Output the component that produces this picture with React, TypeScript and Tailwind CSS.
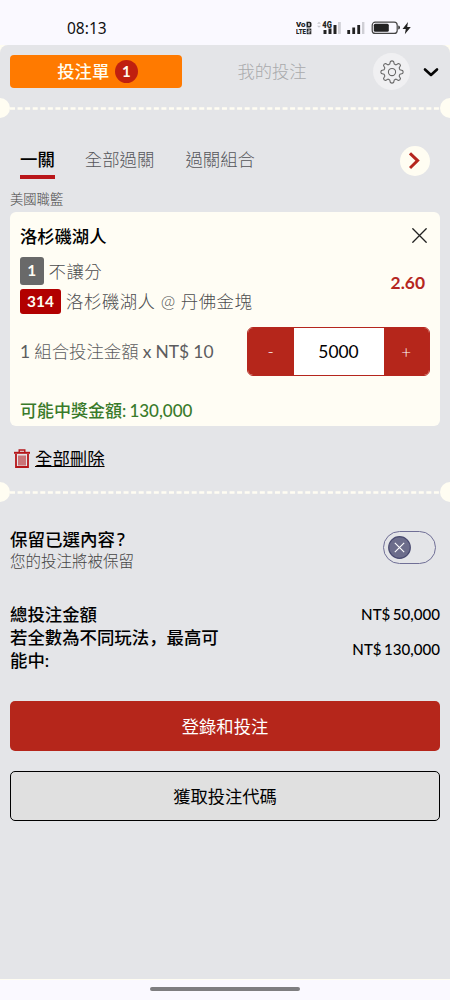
import { useState } from "react";

interface Pick {
  order: number;
  market: string;
  code: string;
  matchup: string;
}

const modes = ["一關", "全部過關", "過關組合"];

const pick: Pick = {
  order: 1,
  market: "不讓分",
  code: "314",
  matchup: "洛杉磯湖人 @ 丹佛金塊"
};

function StatusBar() {
  return (
    <div className="flex h-[45px] items-center justify-between pr-[38px] pl-[67px] pt-[10px]">
      <span className="font-['Noto_Sans'] text-[15.5px] leading-[20px] text-[#111]">08:13</span>
      <svg width="116" height="16" viewBox="0 0 116 16" fill="#222" fontFamily="Roboto, sans-serif" fontWeight="900">
        <text x="0" y="7.2" fontSize="7.8" textLength="9.5" lengthAdjust="spacingAndGlyphs">Vo</text>
        <path fillRule="evenodd" d="M10.5 1.7h3.2q1.8 0 1.8 1.8v2.2q0 1.8-1.8 1.8h-3.2zM12.3 3.1v3h.8q.6 0 .6-.6V3.7q0-.6-.6-.6z" />
        <text x="0" y="14.2" fontSize="7.6" textLength="10" lengthAdjust="spacingAndGlyphs">LTE</text>
        <rect x="10.7" y="8.6" width="4.6" height="5.6" />
        <path d="M11.9 10h2.2v1.4h-2.1v1.5h2.2" fill="none" stroke="#faf9ff" strokeWidth=".7" />
        <path d="M21 3.8l2-2 2 2zM21 5.8l2 2 2-2z" fill="#c9c9cf" />
        <text x="26.3" y="7.8" fontSize="8.4" textLength="9.5" lengthAdjust="spacingAndGlyphs">4G</text>
        <path d="M27.5 10h3v4h-3zM32.5 8.5h3v5.5h-3zM37.5 5h3v9h-3z" />
        <path d="M42 2h2.8v12H42z" fill="#cfcfd5" />
        <path d="M51.3 10h2.8v4h-2.8zM56.3 7.5h2.8V14h-2.8zM61.3 5h2.8v9h-2.8z" />
        <path d="M66 2h2.4v12H66z" fill="#cfcfd5" />
        <rect x="76.2" y="2.2" width="25" height="11.2" rx="3" fill="none" stroke="#444" strokeWidth="1.2" />
        <rect x="77.8" y="3.8" width="15" height="8" rx="1.5" />
        <path d="M102.3 5.5q1.6 0 1.6 2t-1.6 2z" />
        <path d="M112 2l-5.5 7h3.3l-1 5.3 6-7.3h-3.6z" />
      </svg>
    </div>
  );
}

function TicketDivider() {
  return (
    <div className="relative h-5 overflow-hidden">
      <svg className="block" width="450" height="20">
        <circle cx="0" cy="10" r="10" fill="#fffdf2" />
        <circle cx="450" cy="10" r="10" fill="#fffdf2" />
        <path d="M10 10.5H440" stroke="#fffdf2" strokeWidth="2.6" strokeDasharray="5 2.57" />
      </svg>
    </div>
  );
}

function Header() {
  return (
    <header className="flex h-[53px] items-center pl-[10px]">
      <button className="flex h-[33px] w-[172px] items-center justify-center gap-[6px] rounded-[4px] bg-[#ff7a00] pl-[3px] text-[17.3px] font-medium text-[#fffdf0]">
        投注單
        <span className="flex size-[22.5px] items-center justify-center rounded-full bg-[#c0200f] text-[15px] font-bold">1</span>
      </button>
      <button className="ml-[3px] w-[174px] text-center text-[17.3px] font-light text-[#a9aaac]">我的投注</button>
      <button className="ml-[14px] flex size-[37px] items-center justify-center rounded-full bg-[#f0f0f2]">
        <svg width="24" height="24" viewBox="0 0 24 24" fill="none" stroke="#666" strokeWidth="1.05" strokeLinejoin="round">
          <path d="M10.4 1.5Q12 .3 13.6 1.5L14.3 4.1 16.1 4.9 18.4 3.5Q20.3 3.7 20.5 5.6L19.1 7.9 19.9 9.7 22.5 10.4Q23.7 12 22.5 13.6L19.9 14.3 19.1 16.1 20.5 18.4Q20.3 20.3 18.4 20.5L16.1 19.1 14.3 19.9 13.6 22.5Q12 23.7 10.4 22.5L9.7 19.9 7.9 19.1 5.6 20.5Q3.7 20.3 3.5 18.4L4.9 16.1 4.1 14.3 1.5 13.6Q.3 12 1.5 10.4L4.1 9.7 4.9 7.9 3.5 5.6Q3.7 3.7 5.6 3.5L7.9 4.9 9.7 4.1z" />
          <circle cx="12" cy="12" r="3.6" />
        </svg>
      </button>
      <svg className="mt-px ml-[13px]" width="16" height="12" viewBox="0 0 16 12" fill="none" stroke="#050505" strokeWidth="2.6" strokeLinecap="round" strokeLinejoin="round">
        <path d="M2 3.5L8 9l6-5.5" />
      </svg>
    </header>
  );
}

function ModeTabs() {
  const [active, setActive] = useState(0);
  return (
    <nav className="mt-[22px] flex h-10 items-start pr-[20px] pl-5">
      {modes.map((mode, i) => (
        <button
          key={mode}
          onClick={() => setActive(i)}
          className={
            i === active
              ? "mr-[30px] h-[39px] border-b-[4px] border-[#b9161a] pt-[5px] text-[17.4px] leading-[30px] font-medium text-black"
              : "mr-[31px] pt-[5px] text-[17.4px] leading-[30px] font-light text-[#55565a]"
          }
        >
          {mode}
        </button>
      ))}
      <button className="mt-[6px] ml-auto flex size-[30px] items-center justify-center rounded-full bg-[#fffdf2]">
        <svg width="12" height="18" viewBox="0 0 12 18" fill="none" stroke="#b5261e" strokeWidth="3">
          <path d="M1 1.3L8.6 8.6 1 16" />
        </svg>
      </button>
    </nav>
  );
}

function BetCard() {
  const [stake, setStake] = useState(5000);
  return (
    <section className="mx-[10px] mt-[3px] h-[214px] rounded-[6px] bg-[#fffdf4] px-[10px] pt-[13px]">
      <div className="flex h-6 items-center justify-between">
        <h2 className="text-[17.3px] leading-6 font-medium text-black">洛杉磯湖人</h2>
        <svg className="mr-[3px] -mt-[3px]" width="15" height="15" viewBox="0 0 15 15" stroke="#222" strokeWidth="1.3" strokeLinecap="round">
          <path d="M.8.8l13.4 13.4M14.2.8L.8 14.2" />
        </svg>
      </div>
      <div className="mt-[8px] flex h-14 items-center justify-between">
        <div className="flex flex-col gap-1 text-[17.4px] font-light tracking-[0.5px] text-[#4c4c4e]">
          <div className="flex items-center">
            <span className="mr-[5px] flex h-7 w-[23.5px] items-center justify-center rounded-[3px] bg-[#696969] text-[15.4px] font-bold tracking-normal text-[#fffdf4]">{pick.order}</span>
            <span className="pt-[3px]">{pick.market}</span>
          </div>
          <div className="flex h-[25px] items-center">
            <span className="mr-[5px] flex h-[25px] w-[41px] items-center justify-center rounded-[3px] bg-[#b20000] text-[15.4px] font-bold tracking-normal text-[#fffdf4]">{pick.code}</span>
            <span>{pick.matchup}</span>
          </div>
        </div>
        <span className="mr-[5px] mt-[-4px] text-[17.4px] font-bold text-[#b5261e]">2.60</span>
      </div>
      <div className="mt-[14px] flex h-[49px] items-center justify-between">
        <span className="pt-px text-[17.4px] text-[#5c5c5e] [word-spacing:-0.3px]">
          1 <span className="font-light">組合投注金額</span> x NT$ 10
        </span>
        <div className="flex h-[49px] w-[183px] overflow-hidden rounded-[6px] border border-[#b5261e]">
          <button onClick={() => setStake(stake - 1)} className="w-[45.5px] bg-[#b5261b] text-[17px] font-light text-white">-</button>
          <span className="flex flex-1 items-center justify-center bg-white pt-[2px] text-[17.4px] text-black">{stake}</span>
          <button onClick={() => setStake(stake + 1)} className="w-[45.5px] bg-[#b5261b] text-[17px] font-light text-white">+</button>
        </div>
      </div>
      <p className="mt-[23px] text-[17px] leading-6 font-medium text-[#397a2a] [word-spacing:-1.2px]">可能中獎金額: 130,000</p>
    </section>
  );
}

function KeepToggle() {
  return (
    <section className="mt-[25px] flex h-[44px] items-center justify-between pr-[14px] pl-[10px]">
      <div>
        <p className="pt-px text-[17.5px] leading-[22px] font-medium text-black">
          保留已選內容<span className="ml-[2px] font-['Noto_Sans']">?</span>
        </p>
        <p className="text-[15.5px] leading-[21px] font-light text-[#444]">您的投注將被保留</p>
      </div>
      <div className="mt-[-4px] flex h-[33px] w-[53px] items-center rounded-full border border-[#706f96] pl-1">
        <svg width="23" height="23" viewBox="0 0 23 23">
          <circle cx="11.5" cy="11.5" r="10.8" fill="#6c6d8b" stroke="#494a70" strokeWidth="1.2" />
          <path d="M6.8 6.8l9.4 9.4M16.2 6.8l-9.4 9.4" stroke="#fff" strokeWidth="1.1" />
        </svg>
      </div>
    </section>
  );
}

function Totals() {
  return (
    <section className="mt-[32px] px-[10px] text-[17.4px] leading-[23px] font-medium text-black">
      <div className="flex items-center justify-between">
        <span>總投注金額</span>
        <span className="text-[15.1px] [word-spacing:-1.4px]">NT$ 50,000</span>
      </div>
      <div className="flex items-center justify-between">
        <span lang="zh-Hans" className="w-[215px] font-['Lato','Noto_Sans_CJK_SC',sans-serif]">若全數為不同玩法，最高可能中:</span>
        <span className="pt-px text-[15.1px] [word-spacing:-1.4px]">NT$ 130,000</span>
      </div>
    </section>
  );
}

export default function App() {
  return (
    <div className="flex h-[1000px] w-[450px] flex-col overflow-hidden bg-[#faf9ff] font-['Lato','Noto_Sans_CJK_TC',sans-serif]">
      <StatusBar />
      <div className="h-[935px] bg-[#fffdf2]">
        <main lang="zh-Hant" className="h-[934px] rounded-t-[8px] bg-[#e4e5e8]">
          <Header />
          <TicketDivider />
          <ModeTabs />
          <p className="mt-[9px] pl-[10px] text-[13.3px] leading-5 font-light text-[#444]">美國職籃</p>
          <BetCard />
          <div className="mt-[21px] flex h-6 items-center pl-[14px]">
            <svg className="-mt-[2px]" width="16" height="19" viewBox="0 0 16 19" fill="none" stroke="#b5161a">
              <path d="M0 3.8h16" strokeWidth="2" />
              <path d="M5.2 3V1h5.6v2" strokeWidth="1.4" />
              <path d="M2 5v13h12V5" strokeWidth="1.8" />
              <path d="M5 6.5v10M7 6.5v10M9 6.5v10M11 6.5v10" strokeWidth="1.1" />
            </svg>
            <button className="ml-[5px] text-[17.4px] leading-6 text-black underline underline-offset-1">全部刪除</button>
          </div>
          <div className="mt-[11px]">
            <TicketDivider />
          </div>
          <KeepToggle />
          <Totals />
          <div className="mt-[29px] flex flex-col gap-5 px-[10px]">
            <button className="h-[50px] rounded-[5px] bg-[#b5261b] pt-[2px] text-[17.3px] text-white">登錄和投注</button>
            <button className="h-[50px] rounded-[5px] border border-black bg-[#e0e0e0] pt-[2px] text-[17.3px] text-black">獲取投注代碼</button>
          </div>
        </main>
      </div>
      <div className="mx-auto mt-[7px] h-[4px] w-[150px] rounded-full bg-[#7e7e80]" />
    </div>
  );
}
